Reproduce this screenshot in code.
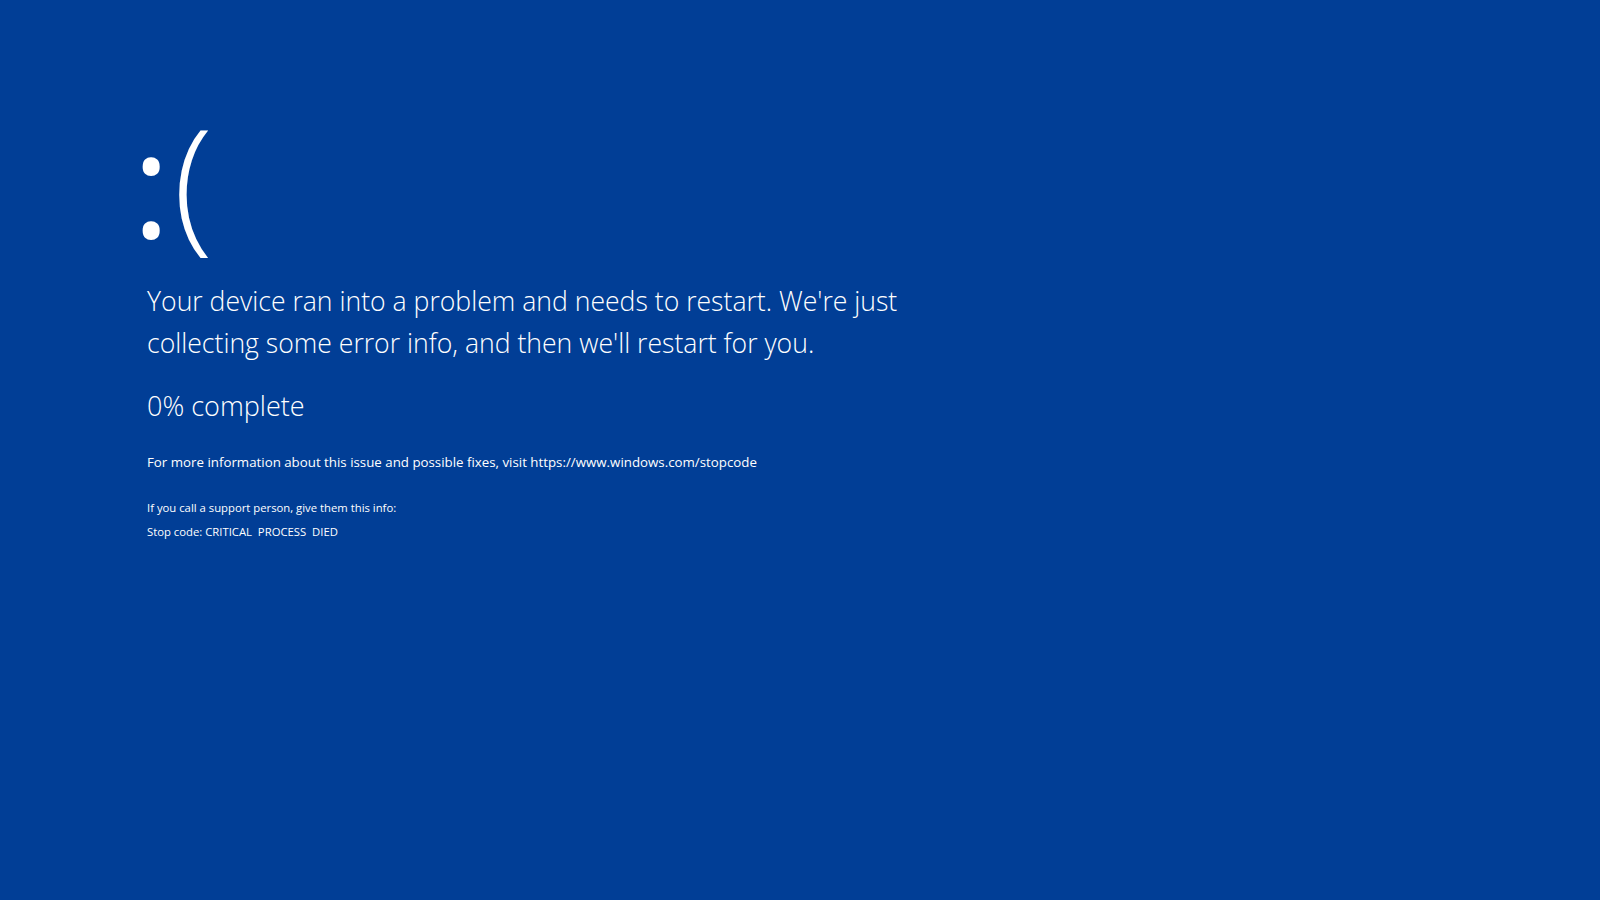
export default function App() {
  return (
    <div className="min-h-screen w-full bg-[#013e96] text-white overflow-hidden" style={{ fontFamily: '"Open Sans", "Noto Sans", sans-serif' }}>
      <div className="pl-[147px] pt-[86px]">
        {/* sad face */}
        <div className="text-[146px] leading-[185px] h-[185px] whitespace-nowrap">
          <span className="font-medium -ml-[15px] relative top-[3px]">:</span>
          <span className="font-light ml-[3px]">(</span>
        </div>

        {/* main message */}
        <p className="mt-[9px] w-[800px] text-[26.6px] leading-[42px] font-light">
          Your device ran into a problem and needs to restart. We're just collecting some error info, and then we'll restart for you.
        </p>
        <p className="mt-[21px] text-[27px] leading-[42px] font-light">0% complete</p>

        {/* details */}
        <p className="mt-[25px] text-[13.3px] leading-[20px]">
          For more information about this issue and possible fixes, visit https://www.windows.com/stopcode
        </p>
        <p className="mt-[26px] text-[11.3px] leading-[20px]">If you call a support person, give them this info:</p>
        <p className="mt-[4px] text-[11.3px] leading-[20px]">Stop code: CRITICAL&nbsp; PROCESS&nbsp; DIED</p>
      </div>
    </div>
  );
}
